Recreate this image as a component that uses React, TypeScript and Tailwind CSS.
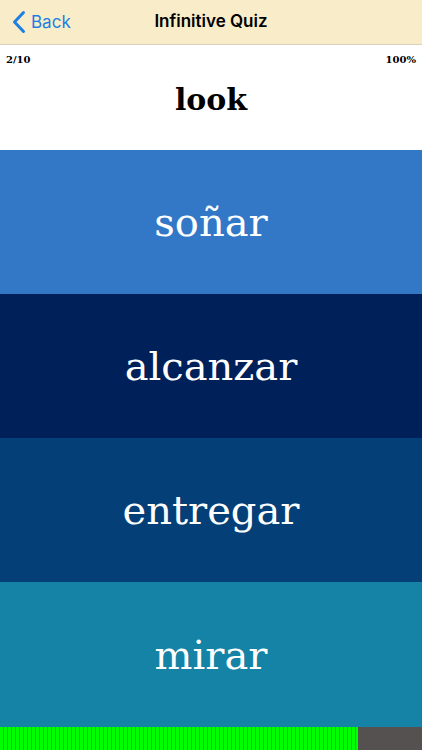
import React from "react";

const serif = { fontFamily: '"DejaVu Serif", "Liberation Serif", serif' };

export default function App() {
  const choices = [
    { text: "soñar", bg: "bg-[#3278c7]", h: "h-[144px]" },
    { text: "alcanzar", bg: "bg-[#00205a]", h: "h-[144px]" },
    { text: "entregar", bg: "bg-[#043f78]", h: "h-[144px]" },
    { text: "mirar", bg: "bg-[#1583a5]", h: "h-[145px]" },
  ];
  return (
    <div className="w-[422px] h-[750px] flex flex-col overflow-hidden bg-white">
      <div className="h-[45px] bg-[#f9ecc8] border-b border-[#d9d2bf] flex items-center relative shrink-0" style={{ fontFamily: 'Inter, "Noto Sans", sans-serif' }}>
        <div className="flex items-center pl-[12px] text-[#1d7fe3] gap-[5px]">
          <svg width="14" height="24" viewBox="0 0 14 24" fill="none">
            <path d="M11.5 2.5 L2.5 12 L11.5 21.5" stroke="#1d7fe3" strokeWidth="3" strokeLinecap="round" strokeLinejoin="round" />
          </svg>
          <span className="text-[17px] leading-none">Back</span>
        </div>
        <div className="absolute inset-x-0 text-center text-[17px] font-semibold text-black pointer-events-none">Infinitive Quiz</div>
      </div>
      <div className="h-[105px] shrink-0 relative flex flex-col" style={serif}>
        <div className="flex justify-between px-[6px] pt-[10px] text-[10px] font-bold text-black leading-none">
          <span>2/10</span>
          <span>100%</span>
        </div>
        <div className="flex-1 flex items-center justify-center pb-[16px]">
          <span className="text-[30px] font-bold text-black leading-none">look</span>
        </div>
      </div>
      {choices.map((c) => (
        <div key={c.text} className={`${c.bg} ${c.h} shrink-0 flex items-center justify-center`} style={serif}>
          <span className="text-white text-[40px] leading-none">{c.text}</span>
        </div>
      ))}
      <div className="flex-1 flex">
        <div className="w-[358px] bg-[#00ff00] bg-[repeating-linear-gradient(90deg,#00ff00_0px,#00ff00_3px,#00c800_3px,#00c800_4px)]" />
        <div className="flex-1 bg-[#545150]" />
      </div>
    </div>
  );
}
